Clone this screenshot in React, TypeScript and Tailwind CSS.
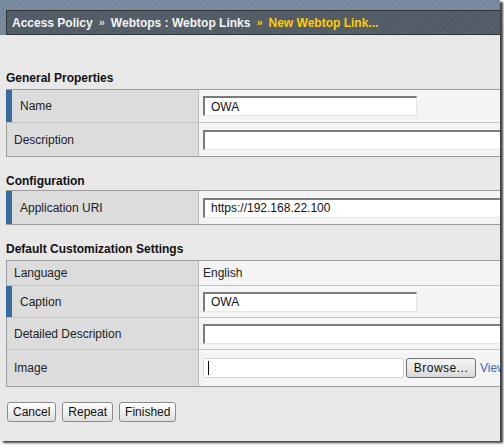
import React from "react";

const font = { fontFamily: '"Liberation Sans", Arial, sans-serif' };

function TextInput({ value, w }: { value?: string; w: string }) {
  return (
    <div
      className={`${w} h-[20px] bg-white border-t-2 border-l-2 border-r border-b border-t-[#7c7c7c] border-l-[#7c7c7c] border-r-[#e6e6e6] border-b-[#e6e6e6] flex items-center pl-[6px] text-[12px] text-[#111] shrink-0`}
    >
      {value}
    </div>
  );
}

function Row({
  label,
  required,
  h,
  children,
  last,
}: {
  label: string;
  required?: boolean;
  h: string;
  children?: React.ReactNode;
  last?: boolean;
}) {
  return (
    <div className={`flex ${h} ${last ? "" : "border-b border-[#c4c4c4]"}`}>
      <div className="w-[192px] shrink-0 bg-[#dcdcdc] border-r border-[#bdbdbd] flex items-center relative">
        {required && <div className="absolute left-[-1px] top-0 bottom-0 w-[6px] bg-[#386a9c]" />}
        <span className={`text-[12px] text-[#222] ${required ? "pl-[13px]" : "pl-[7px]"}`}>{label}</span>
      </div>
      <div className="flex-1 bg-[#f4f4f4] flex items-center pl-[4px]">{children}</div>
    </div>
  );
}

function Table({ children }: { children: React.ReactNode }) {
  return <div className="w-[520px] border border-[#9c9c9c] border-r-0">{children}</div>;
}

function Heading({ children, mb }: { children: React.ReactNode; mb: string }) {
  return <div className={`h-[14px] leading-[14px] text-[12px] font-bold text-[#111] ${mb}`}>{children}</div>;
}

function Btn({ children }: { children: React.ReactNode }) {
  return (
    <button className="h-[20px] px-[5px] rounded-[3px] border border-[#8a8a8a] bg-[linear-gradient(#ffffff,#dedede)] text-[12px] text-[#111] leading-[18px]">
      {children}
    </button>
  );
}

export default function App() {
  return (
    <div className="w-[504px] h-[446px] bg-white" style={font}>
      <div className="w-[500px] h-[441px] bg-[#e8e8e8] overflow-hidden shadow-[3px_2px_2px_rgba(0,0,0,0.75)] flex flex-col">
        <div className="h-[35px] pt-[10px] pl-[6px] bg-[repeating-linear-gradient(135deg,#74869a_0px,#74869a_2px,#7b8ca0_2px,#7b8ca0_4px)] shrink-0">
          <div className="h-[25px] w-[520px] border border-[#343434] bg-[repeating-linear-gradient(135deg,#515b65_0px,#515b65_2px,#56606a_2px,#56606a_4px)] flex items-center pl-[5px] text-[12px] font-bold whitespace-nowrap">
            <span className="text-[#f4f4f4]">Access Policy</span>
            <span className="text-[#dcdcdc] text-[11px] mx-[6px]">»</span>
            <span className="text-[#f4f4f4]">Webtops : Webtop Links</span>
            <span className="text-[#ffcc00] text-[11px] mx-[6px]">»</span>
            <span className="text-[#ffcc00]">New Webtop Link...</span>
          </div>
        </div>

        <div className="pl-[6px] pt-[36px]">
          <Heading mb="mb-[4px]">General Properties</Heading>
          <Table>
            <Row label="Name" required h="h-[33px]">
              <TextInput value="OWA" w="w-[214px]" />
            </Row>
            <Row label="Description" h="h-[33px]" last>
              <TextInput w="w-[320px]" />
            </Row>
          </Table>

          <div className="h-[17px]" />
          <Heading mb="mb-[2px]">Configuration</Heading>
          <Table>
            <Row label="Application URI" required h="h-[33px]" last>
              <TextInput value="https://192.168.22.100" w="w-[320px]" />
            </Row>
          </Table>

          <div className="h-[17px]" />
          <Heading mb="mb-[4px]">Default Customization Settings</Heading>
          <Table>
            <Row label="Language" h="h-[25px]">
              <span className="text-[12px] text-[#222] pl-[0px]">English</span>
            </Row>
            <Row label="Caption" required h="h-[32px]">
              <TextInput value="OWA" w="w-[214px]" />
            </Row>
            <Row label="Detailed Description" h="h-[32px]">
              <TextInput w="w-[320px]" />
            </Row>
            <Row label="Image" h="h-[36px]" last>
              <div className="flex items-center">
                <div className="w-[201px] h-[20px] bg-white border border-[#d4d4d4] rounded-[2px] flex items-center pl-[4px]">
                  <div className="w-[1px] h-[14px] bg-black" />
                </div>
                <button className="ml-[2px] w-[70px] h-[20px] rounded-[3px] border border-[#707070] bg-[linear-gradient(#f6f6f6,#dadada)] text-[12px] text-[#111] tracking-[0.5px]">
                  Browse...
                </button>
                <span className="ml-[4px] text-[12px] text-[#3366cc]">View</span>
              </div>
            </Row>
          </Table>

          <div className="flex gap-[6px] mt-[15px] pl-[1px]">
            <Btn>Cancel</Btn>
            <Btn>Repeat</Btn>
            <Btn>Finished</Btn>
          </div>
        </div>
      </div>
    </div>
  );
}
